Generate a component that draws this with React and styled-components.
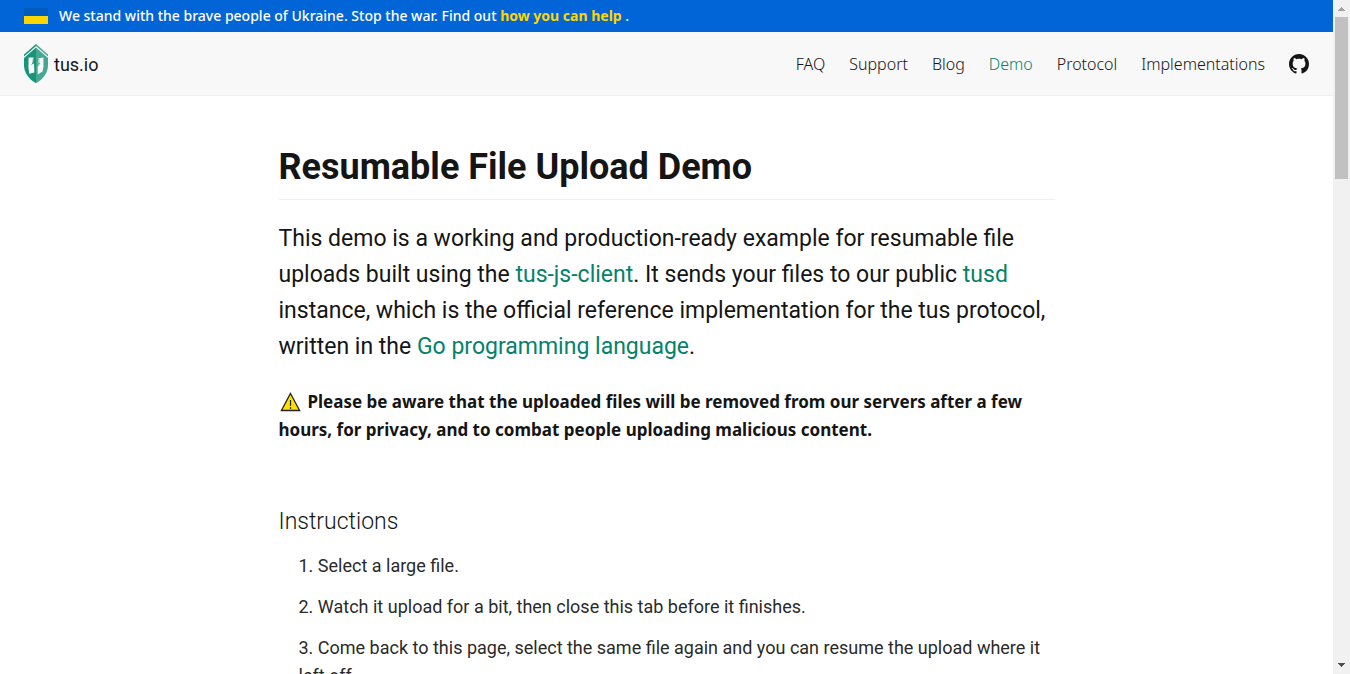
import React from "react";
import styled, { createGlobalStyle } from "styled-components";

const GlobalStyle = createGlobalStyle`
  *, *::before, *::after { box-sizing: border-box; }
  body {
    margin: 0;
    background: #fff;
    color: #151515;
    font-family: Roboto, "Liberation Sans", sans-serif;
    font-weight: 400;
  }
`;

const Shell = styled.div`
  display: grid;
  grid-template-columns: minmax(0, 1fr) 17px;
  height: 100vh;
`;

const Page = styled.div`
  overflow-y: auto;
  scrollbar-width: none;
`;

const Banner = styled.aside`
  display: flex;
  align-items: center;
  gap: 11px;
  padding: 0 24px;
  background: #0265d7;
  color: #fff;
  font-family: "Noto Sans", sans-serif;
  font-size: 14px;
  font-weight: 500;
  line-height: 32px;
`;

const Flag = styled.span`
  width: 24px;
  height: 16px;
  background: linear-gradient(#005bbb 50%, #ffd500 50%);
`;

const BannerText = styled.p`
  margin: 0;
`;

const BannerLink = styled.a`
  color: #ffd500;
  font-weight: 700;
  text-decoration: none;
`;

const Header = styled.header`
  display: flex;
  align-items: center;
  justify-content: space-between;
  height: 64px;
  padding: 0 24px;
  background: #f8f8f8;
  border-bottom: 1px solid #f0f0f0;
`;

const Brand = styled.a`
  display: flex;
  align-items: center;
  gap: 6px;
  color: #151515;
  font-size: 18px;
  line-height: 24px;
  text-decoration: none;
`;

const BrandName = styled.span`
  padding-top: 2px;
`;

const Nav = styled.nav`
  display: flex;
  align-items: center;
  gap: 24px;
`;

const NavLink = styled.a`
  display: flex;
  color: ${({ $active }) => ($active ? "#058269" : "#151515")};
  font-family: "Noto Sans", sans-serif;
  font-size: 16px;
  font-weight: 300;
  line-height: 24px;
  text-decoration: none;
`;

const Content = styled.main`
  max-width: 776px;
  margin: 0 auto;
  padding: 48px 0;
`;

const Title = styled.h1`
  margin: 0 0 21px;
  padding-bottom: 9px;
  border-bottom: 1px solid #f0f0f0;
  font-size: 36px;
  font-weight: 700;
  line-height: 46px;
`;

const Lead = styled.p`
  margin: 0 0 23px;
  font-size: 23px;
  line-height: 36px;
`;

const TextLink = styled.a`
  color: #058269;
  text-decoration: none;
`;

const Warning = styled.p`
  margin: 0 0 60px;
  font-family: "Noto Sans", sans-serif;
  font-size: 17px;
  font-weight: 700;
  line-height: 28px;
`;

const WarningIcon = styled.svg`
  margin: 0 7px 0 1px;
  vertical-align: -4px;
`;

const Subtitle = styled.h2`
  margin: 0 0 12px;
  font-size: 23px;
  font-weight: 300;
  line-height: 36px;
`;

const Steps = styled.ol`
  display: grid;
  gap: 13px;
  margin: 0;
  padding-left: 20px;
  list-style-position: inside;
  color: #2a2a2a;
  font-size: 18px;
  line-height: 28px;
`;

const ScrollTrack = styled.div`
  display: flex;
  flex-direction: column;
  justify-content: space-between;
  background: #f1f1f1;
`;

const ScrollTop = styled.div`
  display: grid;
`;

const ScrollThumb = styled.div`
  width: 13px;
  height: 162px;
  margin: 0 2px;
  background: #c1c1c1;
`;

function Shield() {
  return (
    <svg width="24" height="40" viewBox="0 0 24 40" aria-hidden="true">
      <path d="M0 10.6 12 0v2L0 12.4z" fill="#1a9478" />
      <path d="M24 10.6 12 0v2l12 10.4z" fill="#45a892" />
      <path d="M0 14 12 3.6v35.7C4.500 35 0 28.500 0 21z" fill="#1a9478" />
      <path d="M24 14 12 3.600v35.700C19.500 35 24 28.500 24 21z" fill="#45a892" />
      <path d="M4.600 13.600h5l-.4 4.200-1.400 2.400 2.200-.6.4 9-5.100 1.200-.9-6.500z" fill="#f8f8f8" />
      <path d="M14.400 14.300l5-.9.1 9-1 5-4.800 3v-8.500l1.600-3-1.500.8z" fill="#f8f8f8" />
      <path d="M9.200 14.500l-.5 4.500-1.200 2.200M15 15l-.4 4.500 1.300-.6-1.700 3.400" fill="none" stroke="#1a9478" strokeWidth=".5" />
    </svg>
  );
}

function GitHubMark() {
  return (
    <svg width="20" height="20" viewBox="0 0 16 16" fill="#151515" aria-hidden="true">
      <path d="M8 0C3.58 0 0 3.58 0 8c0 3.54 2.290 6.530 5.470 7.590.4.070.55-.17.55-.38 0-.19-.01-.82-.01-1.490-2.010.37-2.530-.49-2.690-.94-.09-.23-.48-.94-.82-1.130-.28-.15-.68-.52-.01-.53.63-.01 1.080.58 1.230.82.72 1.210 1.870.87 2.330.66.070-.52.28-.87.51-1.070-1.780-.2-3.640-.89-3.640-3.950 0-.87.31-1.590.82-2.150-.08-.2-.36-1.020.08-2.120 0 0 .67-.21 2.200.82.64-.18 1.320-.27 2-.27s1.360.09 2 .27c1.530-1.040 2.200-.82 2.200-.82.44 1.100.16 1.920.08 2.120.51.56.82 1.270.82 2.150 0 3.070-1.870 3.750-3.650 3.950.29.25.54.73.54 1.480 0 1.070-.01 1.930-.01 2.200 0 .21.15.46.55.38A8.010 8.010 0 0 0 16 8c0-4.420-3.580-8-8-8z" />
    </svg>
  );
}

function ScrollArrow({ down }) {
  return (
    <svg width="17" height="17" viewBox="0 0 17 17" aria-hidden="true" shapeRendering="crispEdges">
      <path d={down ? "M5 6h7v1h-1v1h-1v1h-1v1H8V9H7V8H6V7H5z" : "M5 11h7v-1h-1V9h-1V8H9V7H8v1H7v1H6v1H5z"} fill={down ? "#505050" : "#a3a3a3"} />
    </svg>
  );
}

const links = ["FAQ", "Support", "Blog", "Demo", "Protocol", "Implementations"];

export default function App() {
  return (
    <Shell>
      <GlobalStyle />
      <Page>
        <Banner>
          <Flag />
          <BannerText>
            We stand with the brave people of Ukraine. Stop the war. Find out{" "}
            <BannerLink href="#help">how you can help</BannerLink> .
          </BannerText>
        </Banner>
        <Header>
          <Brand href="#home">
            <Shield />
            <BrandName>tus.io</BrandName>
          </Brand>
          <Nav>
            {links.map((label) => (
              <NavLink key={label} href={"#" + label.toLowerCase()} $active={label === "Demo"}>
                {label}
              </NavLink>
            ))}
            <NavLink href="#github" aria-label="GitHub">
              <GitHubMark />
            </NavLink>
          </Nav>
        </Header>
        <Content>
          <Title>Resumable File Upload Demo</Title>
          <Lead>
            This demo is a working and production-ready example for resumable file
            <br />
            uploads built using the <TextLink href="#client">tus-js-client</TextLink>. It sends your files to our public{" "}
            <TextLink href="#tusd">tusd</TextLink>
            <br />
            instance, which is the official reference implementation for the tus protocol,
            <br />
            written in the <TextLink href="#go">Go programming language</TextLink>.
          </Lead>
          <Warning>
            <WarningIcon width="21" height="20" viewBox="0 0 21 20" role="img" aria-label="Warning">
              <path d="M10.500 1.500 19.600 18.500H1.400z" fill="#ffe000" stroke="#222" strokeWidth="1.300" />
              <path d="M10.500 8v6M10.500 15v2" stroke="#222" strokeWidth="1.200" />
            </WarningIcon>
            Please be aware that the uploaded files will be removed from our servers after a few
            <br />
            hours, for privacy, and to combat people uploading malicious content.
          </Warning>
          <Subtitle>Instructions</Subtitle>
          <Steps>
            <li>Select a large file.</li>
            <li>Watch it upload for a bit, then close this tab before it finishes.</li>
            <li>
              Come back to this page, select the same file again and you can resume the upload where it
              <br />
              left off.
            </li>
          </Steps>
        </Content>
      </Page>
      <ScrollTrack aria-hidden="true">
        <ScrollTop>
          <ScrollArrow />
          <ScrollThumb />
        </ScrollTop>
        <ScrollArrow down />
      </ScrollTrack>
    </Shell>
  );
}
